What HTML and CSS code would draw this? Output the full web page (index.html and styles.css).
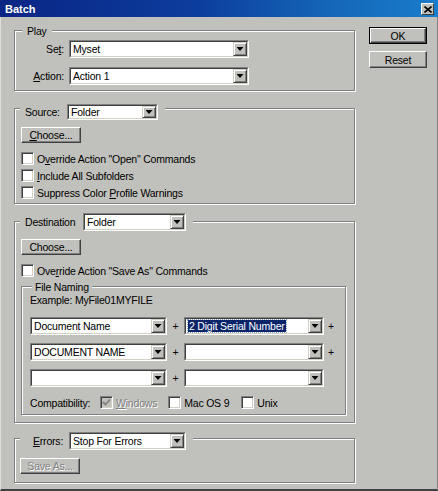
FILE: index.html
```html
<!DOCTYPE html>
<html>
<head>
<meta charset="utf-8">
<title>Batch</title>
<link rel="stylesheet" href="styles.css">
</head>
<body>
<div class="window">
  <div class="titlebar">
    <span class="title">Batch</span>
    <span class="close"><svg width="8" height="7" viewBox="0 0 8 7"><path d="M0.5 0.5 L7.5 6.5 M7.5 0.5 L0.5 6.5" stroke="#000" stroke-width="1.6"/></svg></span>
  </div>
  <div class="content">
    <div class="left">
      <div class="group g-play">
        <div class="legend lg-play">Play</div>
        <div class="frow r1">
          <span class="flabel">Se<u>t</u>:</span>
          <div class="select w-play"><div class="in"><span class="val">Myset</span><span class="arrow"></span></div></div>
        </div>
        <div class="frow r2">
          <span class="flabel"><u>A</u>ction:</span>
          <div class="select w-play"><div class="in"><span class="val">Action 1</span><span class="arrow"></span></div></div>
        </div>
      </div>

      <div class="group g-source">
        <div class="legend lg-src">
          <span class="llabel l-src">Source:</span>
          <div class="select w-src s16"><div class="in"><span class="val">Folder</span><span class="arrow"></span></div></div>
        </div>
        <button class="btn b-choose"><u>C</u>hoose...</button>
        <div class="checks">
          <div class="chk"><span class="cb"></span><span>O<u>v</u>erride Action "Open" Commands</span></div>
          <div class="chk"><span class="cb"></span><span><u>I</u>nclude All Subfolders</span></div>
          <div class="chk"><span class="cb"></span><span>Suppress Color <u>P</u>rofile Warnings</span></div>
        </div>
      </div>

      <div class="group g-dest">
        <div class="legend lg-dest">
          <span class="llabel l-dest">Destination</span>
          <div class="select w-dest"><div class="in"><span class="val">Folder</span><span class="arrow"></span></div></div>
        </div>
        <button class="btn b-choose2">Choose...</button>
        <div class="chk c-save"><span class="cb"></span><span>Ove<u>r</u>ride Action "Save As" Commands</span></div>

        <div class="group g-naming">
          <div class="legend lg-name">File Naming</div>
          <div class="example">Example: MyFile01MYFILE</div>
          <div class="ngrid">
            <div class="select"><div class="in"><span class="val">Document Name</span><span class="arrow"></span></div></div>
            <span class="plus">+</span>
            <div class="select"><div class="in"><span class="val"><span class="hl">2 Digit Serial Number</span></span><span class="arrow"></span></div></div>
            <span class="plus2">+</span>

            <div class="select"><div class="in"><span class="val">DOCUMENT NAME</span><span class="arrow"></span></div></div>
            <span class="plus">+</span>
            <div class="select"><div class="in"><span class="val"></span><span class="arrow"></span></div></div>
            <span class="plus2">+</span>

            <div class="select"><div class="in"><span class="val"></span><span class="arrow"></span></div></div>
            <span class="plus">+</span>
            <div class="select"><div class="in"><span class="val"></span><span class="arrow"></span></div></div>
            <span class="plus2"></span>
          </div>
          <div class="compat">
            <span class="clabel">Compatibility:</span>
            <span class="opt o-win"><span class="cb disabled"><svg width="9" height="9" viewBox="0 0 9 9"><path d="M1 4 L3.5 6.5 L8 1.5" fill="none" stroke="#808080" stroke-width="1.8"/></svg></span><span class="dis"><u>W</u>indows</span></span>
            <span class="opt o-mac"><span class="cb"></span><span>Mac OS 9</span></span>
            <span class="opt o-unix"><span class="cb"></span><span>Unix</span></span>
          </div>
        </div>
      </div>

      <div class="group g-err">
        <div class="legend lg-err">
          <span class="llabel l-err"><u>E</u>rrors:</span>
          <div class="select w-err"><div class="in"><span class="val">Stop For Errors</span><span class="arrow"></span></div></div>
        </div>
        <button class="btn b-save" disabled><span class="dis">Save As...</span></button>
      </div>
    </div>

    <div class="right">
      <div class="defwrap"><button class="btn b-ok">OK</button></div>
      <button class="btn b-reset">Reset</button>
    </div>
  </div>
</div>
</body>
</html>
```

FILE: styles.css
```css
* { box-sizing: border-box; }

body {
  margin: 0;
  background: #c0c0bc;
  font-family: "Liberation Sans", Arial, sans-serif;
  font-size: 10.5px;
  letter-spacing: -0.2px;
  color: #000;
}

.window {
  width: 438px;
  height: 491px;
  display: flex;
  flex-direction: column;
  background: #c0c0bc;
}

.titlebar {
  height: 17px;
  flex: none;
  display: flex;
  align-items: center;
  justify-content: space-between;
  padding: 0 4px 0 5px;
  background: linear-gradient(90deg, #0a2584 0%, #0c3d9e 45%, #1466b8 75%, #1a7ccc 100%);
}

.title {
  color: #fff;
  font-weight: bold;
  font-size: 11px;
  letter-spacing: 0;
}

.close {
  width: 13px;
  height: 12px;
  margin-top: 1px;
  background: #c0c0bc;
  border: 1px solid;
  border-color: #fff #404040 #404040 #fff;
  display: flex;
  align-items: center;
  justify-content: center;
}

.content {
  flex: 1;
  display: flex;
  padding-left: 13px;
  border-left: 1px solid #deded9;
  border-right: 1px solid #808080;
  border-bottom: 2px solid #404040;
}

.left {
  width: 341px;
  padding-top: 13px;
}

.right {
  width: 58px;
  margin-left: 14px;
  padding-top: 10px;
  display: flex;
  flex-direction: column;
  gap: 7px;
}

/* group boxes */
.group {
  border: 1px solid #808080;
  box-shadow: inset 1px 1px 0 #fff, 1px 1px 0 #fff;
  padding: 0 6px;
}

.legend {
  display: flex;
  align-items: center;
  width: max-content;
  background: #c0c0bc;
}

.llabel { display: block; }

/* Play */
.g-play { padding-bottom: 5px; }
.lg-play { height: 13px; margin-top: -7px; margin-left: 1px; padding: 0 5px; }
.frow { display: flex; align-items: center; }
.r1 { margin-top: 3px; }
.r2 { margin-top: 9px; }
.flabel { width: 43px; text-align: right; margin-right: 5px; }
.w-play { width: 180px; }

/* Source */
.g-source { margin-top: 17px; padding-bottom: 2px; }
.lg-src { height: 16px; margin-top: -5px; margin-left: -1px; padding: 0 7px 0 5px; }
.l-src { width: 42px; }
.w-src { width: 91px; }
.b-choose { margin-top: 7px; }
.checks { margin-top: 7px; }

.chk {
  height: 17px;
  display: flex;
  align-items: center;
  gap: 3px;
}

/* Destination */
.g-dest { margin-top: 17px; padding-bottom: 7px; }
.lg-dest { height: 18px; margin-top: -9px; margin-left: -1px; padding: 0 7px 0 5px; }
.l-dest { width: 58px; }
.w-dest { width: 103px; }
.b-choose2 { margin-top: 8px; }
.c-save { margin-top: 7px; }

.g-naming {
  margin-top: 7px;
  width: 325px;
  padding: 0 8px 5px 8px;
}
.lg-name { height: 13px; margin-top: -7px; margin-left: 2px; padding: 0 3px; }
.example { height: 13px; margin-top: 1px; line-height: 13px; }

.ngrid {
  margin-top: 10px;
  display: grid;
  grid-template-columns: 137px 17px 140px 12px;
  row-gap: 8px;
  align-items: center;
}
.plus { text-align: center; }
.plus2 { padding-left: 4px; }

.hl {
  background: #0a246a;
  color: #fff;
  padding: 0 1px;
  outline: 1px dotted #8da0c8;
}

.compat {
  margin-top: 9px;
  height: 13px;
  display: flex;
  align-items: center;
}
.clabel { width: 70px; }
.opt { display: flex; align-items: center; gap: 3px; }
.o-win { margin-right: 11px; }
.o-mac { margin-right: 12px; }

.dis {
  color: #808080;
  text-shadow: 1px 1px 0 #fff;
}

/* Errors */
.g-err { margin-top: 15px; padding-bottom: 8px; }
.lg-err { height: 18px; margin-top: -7px; margin-left: -1px; padding: 0 7px 0 13px; }
.l-err { width: 36px; }
.w-err { width: 117px; }
.b-save { margin-top: 8px; margin-left: -1px; width: 61px; }

/* select (combo) */
.select {
  height: 18px;
  border: 1px solid;
  border-color: #808080 #fff #fff #808080;
}
.s16 { height: 16px; }
.select .in {
  height: 100%;
  display: flex;
  align-items: stretch;
  background: #fff;
  border: 1px solid;
  border-color: #404040 #d4d0c8 #d4d0c8 #404040;
}
.val {
  flex: 1;
  min-width: 0;
  padding-left: 2px;
  white-space: nowrap;
  overflow: hidden;
  display: flex;
  align-items: center;
}
.arrow {
  width: 14px;
  flex: none;
  background: #c0c0bc;
  border: 1px solid;
  border-color: #d4d0c8 #404040 #404040 #d4d0c8;
  box-shadow: inset 1px 1px 0 #fff, inset -1px -1px 0 #808080;
  display: flex;
  align-items: center;
  justify-content: center;
}
.arrow::after {
  content: "";
  width: 7px;
  height: 4px;
  background: #000;
  clip-path: polygon(0 0, 100% 0, 50% 100%);
}

/* checkbox */
.cb {
  width: 13px;
  height: 13px;
  flex: none;
  background: #fff;
  border: 1px solid;
  border-color: #808080 #fff #fff #808080;
  box-shadow: inset 1px 1px 0 #404040, inset -1px -1px 0 #d4d0c8;
  display: flex;
  align-items: center;
  justify-content: center;
}
.cb.disabled { background: #c0c0bc; }

/* buttons */
.btn {
  display: block;
  width: 60px;
  height: 16px;
  padding: 0;
  font: inherit;
  letter-spacing: inherit;
  color: #000;
  background: #c0c0bc;
  border: 1px solid;
  border-color: #fff #404040 #404040 #fff;
  box-shadow: inset -1px -1px 0 #808080;
}

.defwrap {
  width: 58px;
  height: 17px;
  border: 1px solid #000;
}
.b-ok { width: 100%; height: 100%; }
.b-reset { width: 58px; height: 17px; }
```
